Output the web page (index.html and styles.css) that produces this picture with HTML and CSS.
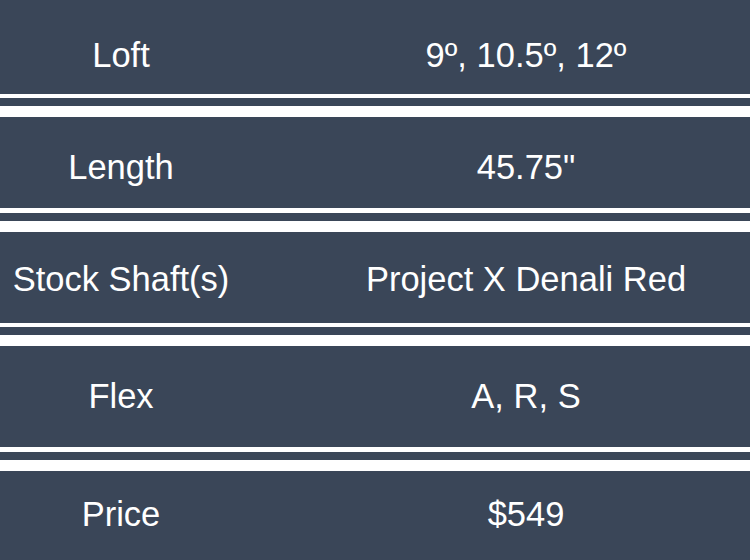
FILE: index.html
```html
<!DOCTYPE html>
<html>
<head>
<meta charset="utf-8">
<link rel="stylesheet" href="styles.css">
</head>
<body>
<div class="specs">
  <div class="row r1"><div class="label">Loft</div><div class="value">9º, 10.5º, 12º</div></div>
  <div class="sep"><div class="band"></div></div>
  <div class="row r2"><div class="label">Length</div><div class="value">45.75"</div></div>
  <div class="sep s2"><div class="band"></div></div>
  <div class="row r3"><div class="label">Stock Shaft(s)</div><div class="value">Project X Denali Red</div></div>
  <div class="sep"><div class="band"></div></div>
  <div class="row r4"><div class="label">Flex</div><div class="value">A, R, S</div></div>
  <div class="sep s2"><div class="band"></div></div>
  <div class="row r5"><div class="label">Price</div><div class="value">$549</div></div>
</div>
</body>
</html>
```
FILE: styles.css
```css
html, body {
  margin: 0;
  padding: 0;
  background: #ffffff;
  overflow: hidden;
}
body {
  width: 750px;
  height: 560px;
  font-family: "Liberation Sans", Arial, sans-serif;
}
.specs {
  display: flex;
  flex-direction: column;
}
.row {
  display: grid;
  grid-template-columns: 242px 508px;
  background: #3a4658;
  color: #ffffff;
  font-size: 34.5px;
  line-height: 40px;
  box-sizing: border-box;
}
.label, .value {
  text-align: center;
  white-space: nowrap;
}
.value {
  padding-left: 60px;
}
.r1 { height: 94px; padding-top: 35px; }
.r2 { height: 91px; padding-top: 30px; }
.r3 { height: 91px; padding-top: 27px; }
.r4 { height: 101px; padding-top: 30px; }
.r5 { height: 89px; padding-top: 23px; }
.sep {
  height: 23px;
  padding-top: 4px;
  box-sizing: border-box;
}
.s2 {
  height: 24px;
  padding-top: 5px;
}
.band {
  height: 8px;
  background: #3a4658;
}
```
